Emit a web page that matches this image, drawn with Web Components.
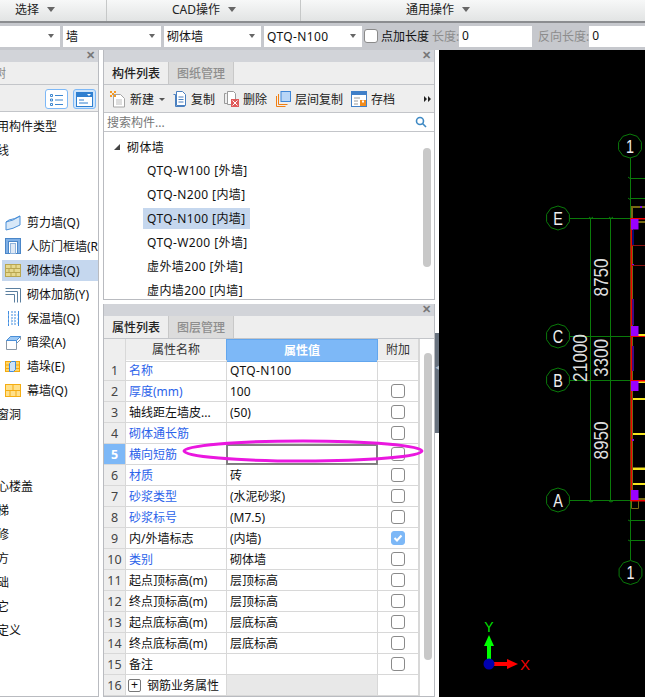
<!DOCTYPE html>
<html>
<head>
<meta charset="utf-8">
<style>
  html, body { margin: 0; padding: 0; background: #fff; }
  body { font: 12px "Noto Sans", "Noto Sans CJK SC", sans-serif; color: #111; width: 645px; height: 697px; overflow: hidden; }
  .q { letter-spacing: .4px; }
</style>
</head>
<body>
<gld-app>
  <gld-ribbon slot="ribbon">
    <ribbon-group style="width:107px;padding-left:15px">选择</ribbon-group>
    <ribbon-group style="width:194px;padding-left:65px">CAD操作</ribbon-group>
    <ribbon-group style="width:344px;padding-left:105px" last>通用操作</ribbon-group>
  </gld-ribbon>
  <gld-bar slot="bar">
    <gld-combo style="width:60px"></gld-combo>
    <gld-combo style="width:98px;margin-left:3px">墙</gld-combo>
    <gld-combo style="width:97px;margin-left:3px">砌体墙</gld-combo>
    <gld-combo style="width:98px;margin-left:3px"><span class="q">QTQ-N100</span></gld-combo>
    <gld-check style="margin:0 3px 0 2px"></gld-check>
    <span>点加长度</span>
    <span style="color:#8c8c8c;margin-left:3px;width:27px">长度:</span>
    <gld-field style="width:73px">0</gld-field>
    <span style="color:#8c8c8c;margin-left:6px;width:52px">反向长度:</span>
    <gld-field style="width:56px">0</gld-field>
  </gld-bar>

  <dock-panel slot="left" tab="树" flat>
    <side-tools>
      <icon-btn><svg width="15" height="15" viewBox="0 0 15 15" fill="none" stroke="#3d86cf"><path d="M1.500 2.500h2v2h-2zM1.500 7h2v2h-2zM1.500 11.500h2v2h-2zM6 3.500h8M6 8h8M6 12.500h8"/></svg></icon-btn>
      <icon-btn on><svg width="17" height="15" viewBox="0 0 17 15"><rect x=".5" y=".5" width="16" height="14" fill="#fff" stroke="#2f7fd0"/><rect x="1" y="1" width="15" height="4" fill="#2f7fd0"/><path d="M11 2h4l-2 2z" fill="#fff"/><path d="M3 8h5M3 11h9" stroke="#2f7fd0"/></svg></icon-btn>
    </side-tools>
    <side-list>
      <tree-row clip>常用构件类型</tree-row>
      <tree-row clip>轴线</tree-row>
      <tree-row></tree-row>
      <tree-row></tree-row>
      <tree-row><svg slot="icon" width="17" height="17" viewBox="0 0 17 17"><path d="M1 8q7-1 14-6v9q-7 4-14 5z" fill="#d8e8f8" stroke="#4a8fd8"/><path d="M1 8l3-2q6-1 11-4" fill="none" stroke="#4a8fd8"/></svg>剪力墙(Q)</tree-row>
      <tree-row><svg slot="icon" width="17" height="17" viewBox="0 0 17 17"><rect x=".5" y=".5" width="15" height="15" fill="#7fb0e6" stroke="#4a86c8"/><rect x="3.500" y="3.500" width="9" height="12" fill="#fff" stroke="#4a86c8"/><rect x="5.500" y="5.500" width="5" height="10" fill="#dfe9f5" stroke="#8fb4dd"/></svg>人防门框墙(R</tree-row>
      <tree-row sel><svg slot="icon" width="17" height="17" viewBox="0 0 17 17"><rect x=".5" y="2.500" width="15" height="12" fill="#e6d98f" stroke="#b9a650"/><path d="M1 6.500h14M1 10.500h14M6 3v3.500M11 3v3.500M4 7v3.500M9 7v3.500M6 11v3.500M11 11v3.500" stroke="#b9a650" fill="none"/></svg>砌体墙(Q)</tree-row>
      <tree-row><svg slot="icon" width="17" height="17" viewBox="0 0 17 17" fill="none" stroke="#5b7f9f"><path d="M.5 2.500h15v14M.5 5.500h12v11M.5 8.500h9v8"/></svg>砌体加筋(Y)</tree-row>
      <tree-row><svg slot="icon" width="17" height="17" viewBox="0 0 17 17" fill="none"><path d="M3.500 1v15M13.500 1v15" stroke="#3f8ce0"/><path d="M7 1v15M10 1v15" stroke="#3f8ce0" stroke-dasharray="2 1"/><path d="M3 5h11M3 9h11M3 13h11" stroke="#9cc4ee" stroke-dasharray="1 2"/></svg>保温墙(Q)</tree-row>
      <tree-row><svg slot="icon" width="17" height="17" viewBox="0 0 17 17"><path d="M1.500 6.500l4-4h10v3l-4 4v6h-10z" fill="#fff" stroke="#8a97a5"/><path d="M1.500 6.500h10l4-4h-10z" fill="#9cc8f4" stroke="#4a8fd8"/><path d="M11.500 6.500v3" stroke="#4a8fd8"/></svg>暗梁(A)</tree-row>
      <tree-row><svg slot="icon" width="17" height="17" viewBox="0 0 17 17"><rect x=".5" y="3.500" width="14" height="10" fill="#ffd569" stroke="#f3a90f"/><path d="M1 7h13M1 10.500h13" stroke="#f3a90f"/><path d="M4.500 5.500l2-2h4v8l-2 2h-4z" fill="#cfe3f8" stroke="#3f8ce0"/></svg>墙垛(E)</tree-row>
      <tree-row><svg slot="icon" width="17" height="17" viewBox="0 0 17 17"><rect x=".5" y="2.500" width="15" height="12" fill="#ffe08a" stroke="#f5ad12"/><path d="M1 8.500h14M8 3v5.500M5 9v5M11 9v5" stroke="#f5ad12"/></svg>幕墙(Q)</tree-row>
      <tree-row clip>门窗洞</tree-row>
      <tree-row></tree-row>
      <tree-row></tree-row>
      <tree-row clip>空心楼盖</tree-row>
      <tree-row clip>楼梯</tree-row>
      <tree-row clip>装修</tree-row>
      <tree-row clip>土方</tree-row>
      <tree-row clip>基础</tree-row>
      <tree-row clip>其它</tree-row>
      <tree-row clip>自定义</tree-row>
    </side-list>
  </dock-panel>

  <dock-panel slot="top" tab="构件列表" tab2="图纸管理">
    <comp-tools>
      <tool-btn style="width:63px" drop><svg slot="icon" width="16" height="17" viewBox="0 0 16 17"><path d="M3.500 3.500h7l4 4v8.500h-11z" fill="#fff" stroke="#a5a5a5"/><path d="M6 9h6M6 11h6M6 13h6" stroke="#bcbcbc"/><path d="M0 0h2v2H0zM4 0h2v2H4zM2 2h2v2H2zM0 4h2v2H0zM4 4h2v2H4z" fill="#f59a23"/></svg>新建</tool-btn>
      <tool-btn style="width:51px"><svg slot="icon" width="14" height="16" viewBox="0 0 14 16" fill="none" stroke="#4a7fbf"><path d="M.5 3.500h2v12h9v-2"/><path d="M3.500.5h6l3 3v11h-9z" fill="#fff"/><path d="M5.500 6h5M5.500 8.500h5M5.500 11h5"/></svg>复制</tool-btn>
      <tool-btn style="width:52px"><svg slot="icon" width="15" height="16" viewBox="0 0 15 16"><path d="M.5 2.500h2M.5 2.500v10h3" fill="none" stroke="#9a9a9a"/><path d="M3.500.5h6l2 2v6h-4v5h-4z" fill="#fff" stroke="#9a9a9a"/><rect x="7" y="8" width="8" height="8" fill="#e05a5a"/><path d="M8.500 9.500l5 5M13.500 9.500l-5 5" stroke="#fff"/></svg>删除</tool-btn>
      <tool-btn style="width:75px"><svg slot="icon" width="15" height="16" viewBox="0 0 15 16" fill="none"><path d="M.5 5v10.500h9" stroke="#f07f13"/><path d="M2.500 3v10.500h9" stroke="#f07f13"/><rect x="5" y=".5" width="9.500" height="10" fill="#b8d6f7" stroke="#3f86d6"/></svg>层间复制</tool-btn>
      <tool-btn style="width:48px"><svg slot="icon" width="16" height="16" viewBox="0 0 16 16"><rect x=".5" y=".5" width="15" height="15" fill="#fff" stroke="#3f7fc8"/><rect x="1" y="1" width="14" height="3" fill="#3f7fc8"/><path d="M3 7h6M3 10h4M3 13h4" stroke="#9a9a9a"/><rect x="9" y="9" width="6" height="6" fill="#f28c1c"/><rect x="11" y="9.500" width="2" height="2" fill="#fff"/></svg>存档</tool-btn>
      <svg style="margin-left:auto;margin-right:3px" width="7" height="6" viewBox="0 0 7 6" fill="#222"><path d="M0 0l3 3-3 3zM4 0l3 3-3 3z"/></svg>
    </comp-tools>
    <search-box>搜索构件...</search-box>
    <comp-tree>
      <comp-node head>砌体墙</comp-node>
      <comp-node>QTQ-W100 [外墙]</comp-node>
      <comp-node>QTQ-N200 [内墙]</comp-node>
      <comp-node sel>QTQ-N100 [内墙]</comp-node>
      <comp-node>QTQ-W200 [外墙]</comp-node>
      <comp-node>虚外墙200 [外墙]</comp-node>
      <comp-node>虚内墙200 [内墙]</comp-node>
    </comp-tree>
  </dock-panel>

  <dock-panel slot="bottom" tab="属性列表" tab2="图层管理">
    <prop-grid>
      <prop-row n="1" name="名称" blue value="QTQ-N100" nocheck></prop-row>
      <prop-row n="2" name="厚度(mm)" blue value="100"></prop-row>
      <prop-row n="3" name="轴线距左墙皮..." value="(50)"></prop-row>
      <prop-row n="4" name="砌体通长筋" blue value=""></prop-row>
      <prop-row n="5" name="横向短筋" blue value="" active></prop-row>
      <prop-row n="6" name="材质" blue value="砖"></prop-row>
      <prop-row n="7" name="砂浆类型" blue value="(水泥砂浆)"></prop-row>
      <prop-row n="8" name="砂浆标号" blue value="(M7.5)"></prop-row>
      <prop-row n="9" name="内/外墙标志" value="(内墙)" checked></prop-row>
      <prop-row n="10" name="类别" blue value="砌体墙"></prop-row>
      <prop-row n="11" name="起点顶标高(m)" value="层顶标高"></prop-row>
      <prop-row n="12" name="终点顶标高(m)" value="层顶标高"></prop-row>
      <prop-row n="13" name="起点底标高(m)" value="层底标高"></prop-row>
      <prop-row n="14" name="终点底标高(m)" value="层底标高"></prop-row>
      <prop-row n="15" name="备注" value=""></prop-row>
      <prop-row n="16" name="钢筋业务属性" value="" group nocheck></prop-row>
      <prop-row n="17" name="" value="" nocheck></prop-row>
    </prop-grid>
  </dock-panel>

  <cad-view slot="cad"></cad-view>
</gld-app>

<script>
  function define(name, css, html, setup) {
    class El extends HTMLElement {
      connectedCallback() {
        if (this.shadowRoot) return;
        var root = this.attachShadow({ mode: 'open' });
        var body = typeof html === 'function' ? html(this) : html;
        root.innerHTML = '<style>' + css + '</style>' + body;
        if (setup) setup(this, root);
      }
    }
    customElements.define(name, El);
  }

  define('gld-app', `
    :host { display: grid; width: 645px; height: 697px; grid-template-columns: 99px 4px 332px 4px 206px; grid-template-rows: 23px 27px 250px 4px 393px; }
    .r { grid-column: 1 / -1; grid-row: 1; }
    .b { grid-column: 1 / -1; grid-row: 2; }
    .l { grid-column: 1; grid-row: 3 / 6; min-height: 0; }
    .gut { grid-column: 2; grid-row: 3 / 6; background: #fff; }
    .t { grid-column: 3; grid-row: 3; min-height: 0; }
    .m { grid-column: 3; grid-row: 5; min-height: 0; position: relative; }
    .s { grid-column: 4; grid-row: 3 / 6; background: #fff; padding-top: 283px; }
    .s div { height: 100px; background: #68727e; color: #b8bec6; font-size: 7px; line-height: 70px; overflow: hidden; }
    .c { grid-column: 5; grid-row: 3 / 6; }
    .ring { position: absolute; left: 78px; top: 133px; }
  `, `
    <div class="r"><slot name="ribbon"></slot></div>
    <div class="b"><slot name="bar"></slot></div>
    <div class="l"><slot name="left"></slot></div>
    <div class="gut"></div>
    <div class="t"><slot name="top"></slot></div>
    <div class="m"><slot name="bottom"></slot>
      <svg class="ring" width="244" height="28" viewBox="0 0 244 28"><ellipse cx="122" cy="14" rx="119" ry="10" fill="none" stroke="#ea17df" stroke-width="3"/></svg>
    </div>
    <div class="s"><div>◀</div></div>
    <div class="c"><slot name="cad"></slot></div>
  `);

  define('gld-ribbon', `
    :host { display: flex; height: 23px; box-sizing: border-box; background: linear-gradient(#f7f8f8, #e2e4e4); border-bottom: 2px solid #8b8d90; overflow: hidden; }
  `, `<slot></slot>`);

  define('ribbon-group', `
    :host { display: flex; flex: none; align-items: center; box-sizing: border-box; height: 21px; padding-bottom: 3px; border-right: 1px solid #c6c8c8; color: #222; font-size: 12px; }
    :host([last]) { border-right: 0; }
    i { margin-left: 8px; border: 4px solid transparent; border-top: 5px solid #666; border-bottom: 0; }
  `, `<slot></slot><i></i>`);

  define('gld-bar', `
    :host { display: flex; align-items: center; height: 27px; background: #c6c8cd; padding: 0 0 1px; box-sizing: border-box; white-space: nowrap; overflow: hidden; font-size: 12px; }
  `, `<slot></slot>`);

  define('gld-combo', `
    :host { display: flex; flex: none; align-items: center; justify-content: space-between; height: 21px; background: #fff; padding: 0 6px 0 3px; box-sizing: border-box; }
    i { border: 3.500px solid transparent; border-top: 4px solid #666; border-bottom: 0; }
  `, `<span><slot></slot></span><i></i>`);

  define('gld-field', `
    :host { display: block; flex: none; height: 21px; line-height: 20px; background: #fff; padding-left: 3px; box-sizing: border-box; }
  `, `<slot></slot>`);

  define('gld-check', `
    :host { display: block; flex: none; width: 14px; height: 14px; box-sizing: border-box; background: #fff; border: 1px solid #8a8a8a; border-radius: 3px; }
  `, ``);

  define('dock-panel', `
    :host { display: flex; flex-direction: column; height: 100%; box-sizing: border-box; border: 1px solid #b9bbc0; border-top: 0; overflow: hidden; background: #fff; }
    :host([flat]) { border-left: 0; }
    .title { flex: none; height: 12px; background: #d2d4d9; color: #777; font: bold 11px/11px "Liberation Sans", sans-serif; text-align: right; padding-right: 3px; }
    .tabs { flex: none; display: flex; height: 22px; background: #eeeeee; border-bottom: 1px solid #c3c5c9; }
    .tab { width: 64px; text-align: center; line-height: 23px; font-weight: 500; color: #222; }
    .tab2 { width: 64px; text-align: center; line-height: 23px; background: #dcdcdc; color: #8e8e8e; border-left: 1px solid #c8c8c8; border-right: 1px solid #c8c8c8; font-weight: 500; }
    .clip { margin-left: -6px; width: auto; color: #888; font-weight: 400; }
    .body { flex: 1; min-height: 0; display: flex; flex-direction: column; }
  `, function (el) {
    var t = el.getAttribute('tab'), t2 = el.getAttribute('tab2');
    return '<div class="title">✕</div><div class="tabs"><div class="tab ' + (t2 ? '' : 'clip') + '">' + t + '</div>' +
      (t2 ? '<div class="tab2">' + t2 + '</div>' : '') + '</div><div class="body"><slot></slot></div>';
  });

  define('side-tools', `
    :host { flex: none; display: flex; justify-content: flex-end; gap: 5px; height: 27px; box-sizing: border-box; padding: 4px 2px 0 0; background: #eeeeee; border-bottom: 1px solid #c3c5c9; }
  `, `<slot></slot>`);

  define('icon-btn', `
    :host { display: flex; align-items: center; justify-content: center; width: 23px; height: 20px; box-sizing: border-box; background: #fff; border: 1px solid #7db8f7; border-radius: 3px; }
    :host([on]) { background: #cfe5fb; }
  `, `<slot></slot>`);

  define('side-list', `
    :host { display: block; padding-top: 2px; overflow: hidden; }
  `, `<slot></slot>`);

  define('tree-row', `
    :host { display: block; height: 24px; box-sizing: border-box; padding: 2px 0 1px 2px; white-space: nowrap; overflow: hidden; }
    .in { display: flex; align-items: center; height: 21px; gap: 5px; padding-left: 3px; }
    .in span { padding-bottom: 2px; }
    :host([sel]) .in { background: #c5d7ee; }
    :host([clip]) .in { margin-left: -20px; }
    ::slotted(svg) { flex: none; }
  `, `<div class="in"><slot name="icon"></slot><span><slot></slot></span></div>`);

  define('comp-tools', `
    :host { flex: none; display: flex; align-items: center; height: 28px; box-sizing: border-box; padding: 1px 0 0 6px; background: #eeeeee; border-bottom: 1px solid #c3c5c9; }
  `, `<slot></slot>`);

  define('tool-btn', `
    :host { display: flex; flex: none; align-items: center; gap: 4px; color: #222; white-space: nowrap; }
    i { margin-left: 1px; border: 3px solid transparent; border-top: 3px solid #555; border-bottom: 0; }
    ::slotted(svg) { flex: none; }
  `, function (el) {
    return '<slot name="icon"></slot><span><slot></slot></span>' + (el.hasAttribute('drop') ? '<i></i>' : '');
  });

  define('search-box', `
    :host { flex: none; display: flex; align-items: center; justify-content: space-between; height: 19px; box-sizing: border-box; padding: 0 7px 0 3px; background: #fff; border-bottom: 1px solid #c3c5c9; color: #777; }
  `, `<span><slot></slot></span><svg width="12" height="12" viewBox="0 0 12 12" fill="none" stroke="#3f8ac4" stroke-width="1.600"><circle cx="5" cy="5" r="3.500"/><path d="M7.500 7.500l3.500 3.500"/></svg>`);

  define('comp-tree', `
    :host { flex: 1; min-height: 0; display: flex; gap: 0; overflow: hidden; padding-top: 3px; }
    .list { flex: 1; min-width: 0; }
    .bar { flex: none; width: 8px; height: 119px; margin: 13px 3px 0 0; background: #c8c8c8; border-radius: 4px; }
  `, `<div class="list"><slot></slot></div><div class="bar"></div>`);

  define('comp-node', `
    :host { display: block; height: 24px; box-sizing: border-box; padding: 1px 0 2px 39px; white-space: nowrap; }
    :host([head]) { padding-left: 6px; }
    .in { display: inline-flex; align-items: center; height: 21px; box-sizing: border-box; padding: 0 4px 2px; letter-spacing: .4px; }
    :host([head]) .in { padding-bottom: 0; }
    :host([sel]) .in { background: #c5d7ee; }
    i { width: 0; height: 0; margin-right: 7px; border-style: solid; border-width: 0 0 6px 6px; border-color: transparent transparent #444 transparent; }
  `, function (el) {
    return '<span class="in">' + (el.hasAttribute('head') ? '<i></i>' : '') + '<slot></slot></span>';
  });

  define('prop-grid', `
    :host { flex: 1; min-height: 0; display: flex; overflow: hidden; }
    .tbl { flex: none; width: 315px; }
    .head { display: grid; width: 315px; grid-template-columns: 22px 101px 151px 41px; height: 21px; text-align: center; line-height: 21px; background: #eeeeee; color: #333; }
    .head div { border-right: 1px solid #d8d8d8; border-bottom: 1px solid #d8d8d8; }
    .head .v { background: #7db8f7; color: #fff; font-weight: 700; border: 1px solid #62a6ee; margin-left: -1px; }
    .bar { flex: none; width: 8px; height: 307px; margin: 14px 0 0 4px; background: #c8c8c8; border-radius: 4px; }
    .track { flex: none; width: 16px; border-left: 1px solid #d8d8d8; box-sizing: border-box; }
  `, `
    <div class="tbl">
      <div class="head"><div></div><div>属性名称</div><div class="v">属性值</div><div>附加</div></div>
      <slot></slot>
    </div>
    <div class="track"><div class="bar"></div></div>
  `);

  define('prop-row', `
    :host { display: grid; grid-template-columns: 22px 101px 151px 41px; height: 21px; line-height: 21px; box-sizing: border-box; white-space: nowrap; }
    div { border-right: 1px solid #d8d8d8; border-bottom: 1px solid #d8d8d8; box-sizing: border-box; overflow: hidden; }
    .n { background: #eeeeee; color: #444; text-align: center; font-size: 12.500px; }
    .k { padding: 1px 0 0 3px; display: flex; align-items: center; gap: 5px; }
    .v { padding-left: 3px; }
    .a { display: flex; align-items: center; justify-content: center; }
    :host([blue]) .k { color: #2c63ea; }
    :host([active]) .n { background: #7db8f7; color: #fff; font-weight: 700; }
    :host([active]) .v { border: 2px solid #808080; margin-left: -1px; }
    :host([group]) .v { background: #e8e8e8; }
    b { display: block; width: 14px; height: 14px; box-sizing: border-box; background: #fff; border: 1px solid #8a8a8a; border-radius: 3px; }
    b.on { background: #7db8f7; border-color: #7db8f7; }
    b svg { display: block; }
    .plus { flex: none; display: block; box-sizing: border-box; width: 13px; height: 13px; border: 1px solid #777; border-radius: 2px; font: 12px/11px "Liberation Sans", sans-serif; text-align: center; margin: 0 1px 0 -1px; }
  `, function (el) {
    var g = function (a) { return el.getAttribute(a) || ''; };
    var box = '';
    if (!el.hasAttribute('nocheck')) {
      box = el.hasAttribute('checked')
        ? '<b class="on"><svg width="12" height="12" viewBox="0 0 12 12" fill="none" stroke="#fff" stroke-width="2"><path d="M2.500 6l2.500 2.500 4.500-5"/></svg></b>'
        : '<b></b>';
    }
    var plus = el.hasAttribute('group') ? '<span class="plus">+</span>' : '';
    var v = g('value');
    return '<div class="n">' + g('n') + '</div><div class="k">' + plus + '<span>' + g('name') + '</span></div><div class="v"' +
      (/Q/.test(v) ? ' style="letter-spacing:.4px"' : '') + '>' + v + '</div><div class="a">' + box + '</div>';
  });

  define('cad-view', `
    :host { display: block; height: 100%; background: #000; overflow: hidden; }
    svg { display: block; }
    text { font-family: "Liberation Sans", sans-serif; }
    .lab { fill: #eee; font-size: 18px; text-anchor: middle; }
    .dim { fill: #ddd; font-size: 20px; text-anchor: middle; }
  `, function () {
    // drawing coordinates are the page's own, shifted by the viewBox
    var bubble = function (x, y, t) {
      var r = 12, p = [];
      for (var i = 0; i < 10; i++) {
        var a = Math.PI * 2 * i / 10 + Math.PI / 10;
        p.push((x + r * Math.cos(a)).toFixed(1) + ',' + (y + r * Math.sin(a)).toFixed(1));
      }
      return '<polygon points="' + p.join(' ') + '" fill="none" stroke="#0a7a0a"/>' +
        '<text class="lab" transform="translate(' + x + ' ' + (y + 6.500) + ') scale(.8 1)">' + t + '</text>';
    };
    var dim = function (x, y, t) {
      return '<text class="dim" transform="translate(' + x + ' ' + y + ') rotate(-90) scale(.86 1)">' + t + '</text>';
    };
    var rect = function (x, y, w, h, c) {
      return '<rect x="' + x + '" y="' + y + '" width="' + w + '" height="' + h + '" fill="' + c + '"/>';
    };
    var green = 'M630.500 158V560M570 218.500H645M570 336.500H630M570 380.500H630M570 500.500H645M590.500 218V501M610.500 218V501' +
      'M630.500 178.500H645M630.500 198.500H645M630.500 520.500H645M630.500 540.500H645' +
      'M589 217l2 1.500 2-1.500M609 217l2 1.500 2-1.500M628 177l2 1.500M628 198l2 1.500M628 520l2 1M628 540l2 1M589 501l2 1 2-1M609 501l2 1 2-1';
    var walls =
      rect(632, 206, 13, 2, '#776a12') + rect(631, 206, 2, 294, '#776a12') + rect(640, 206, 2, 2, '#7a10e0') +
      rect(632, 221, 13, 2, '#776a12') +
      rect(631, 230, 3, 15, '#0a0a70') + rect(631, 299, 3, 26, '#400a80') + rect(631, 346, 3, 25, '#400a80') +
      rect(631, 264, 3, 2, '#7a10e0') + rect(632, 439, 2, 2, '#7a10e0') +
      rect(631, 245, 14, 1, '#8b1010') + rect(631, 265, 14, 1, '#8b1010') +
      rect(633, 398, 12, 2, '#f5e61e') + rect(633, 433, 12, 2, '#f5e61e') + rect(633, 467, 12, 1, '#776a12') + rect(633, 468, 12, 2, '#f5e61e') + rect(633, 483, 12, 2, '#f5e61e') +
      rect(638, 334, 7, 2, '#f5e61e') + rect(638, 381, 7, 2, '#f5e61e') + rect(638, 498, 7, 2, '#776a12') +
      rect(630, 218, 15, 1.500, '#f00000') + rect(630, 336, 15, 1, '#f00000') + rect(630, 380, 15, 1.500, '#f00000') + rect(630, 500, 15, 1.500, '#f00000') +
      rect(630.500, 218, 1.500, 283, '#f00000') +
      rect(631, 219, 7.500, 10.500, '#9a00ff') + rect(631, 326, 7.500, 10, '#9a00ff') + rect(631, 381, 7.500, 10, '#9a00ff') + rect(631, 490, 7.500, 10, '#9a00ff');
    return '<svg width="206" height="647" viewBox="439 50 206 647">' +
      '<path d="' + green + '" fill="none" stroke="#0a7a0a"/>' + walls +
      '<path d="M631.500 501v7.500h7V501" fill="none" stroke="#776a12" stroke-width="1"/>' +
      bubble(630, 146, '1') + bubble(558, 218, 'E') + bubble(558, 336, 'C') + bubble(558, 380, 'B') + bubble(558, 500, 'A') + bubble(630.500, 572.500, '1') +
      dim(608, 277.500, '8750') + dim(608, 358, '3300') + dim(608, 440.500, '8950') + dim(587, 358, '21000') +
      rect(487, 644, 4, 20, '#00ff00') + '<path d="M489 635l5 11h-10z" fill="#00ff00"/>' +
      rect(489, 662, 18, 4, '#ff0000') + '<path d="M518 664l-11 5v-10z" fill="#ff0000"/>' +
      '<circle cx="489" cy="664" r="5.500" fill="#0000b0"/>' +
      '<text x="489" y="632" text-anchor="middle" font-size="14" fill="#00e000">Y</text>' +
      '<text x="525" y="670" text-anchor="middle" font-size="15" fill="#f00000">X</text>' +
      '</svg>';
  });
</script>
</body>
</html>
